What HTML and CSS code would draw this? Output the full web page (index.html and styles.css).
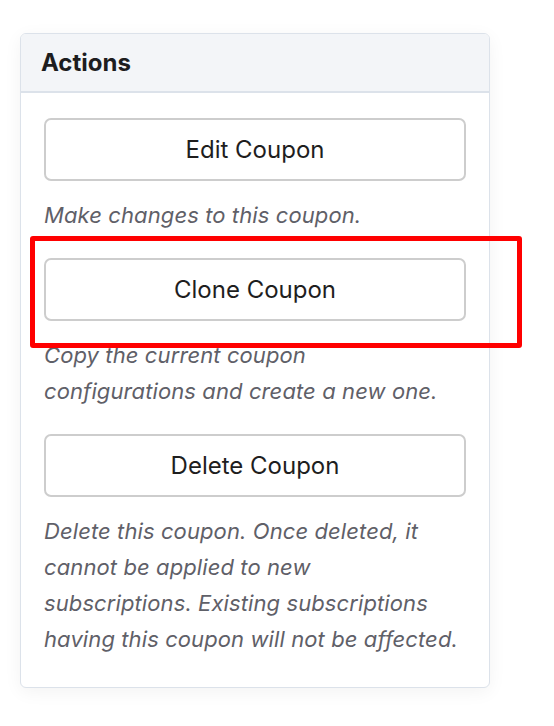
FILE: index.html
```html
<!DOCTYPE html>
<html>
<head>
<meta charset="utf-8">
<link rel="stylesheet" href="styles.css">
</head>
<body>
<div class="page">
  <div class="panel">
    <div class="panel-header">Actions</div>
    <div class="panel-body">
      <button class="btn">Edit Coupon</button>
      <p class="desc">Make changes to this coupon.</p>
      <button class="btn">Clone Coupon</button>
      <p class="desc">Copy the current coupon configurations and create a new one.</p>
      <button class="btn">Delete Coupon</button>
      <p class="desc">Delete this coupon. Once deleted, it cannot be applied to new subscriptions. Existing subscriptions having this coupon will not be affected.</p>
    </div>
  </div>
  <div class="highlight"></div>
</div>
</body>
</html>
```
FILE: styles.css
```css
html, body {
  margin: 0;
  padding: 0;
  background: #ffffff;
}
body {
  font-family: Inter, "Open Sans", "Liberation Sans", sans-serif;
}
.page {
  position: relative;
  width: 554px;
  height: 726px;
  padding: 33px 0 0 20px;
  box-sizing: border-box;
}
.panel {
  width: 470px;
  box-sizing: border-box;
  border: 1px solid #dce2ea;
  border-radius: 6px;
  background: #fff;
  box-shadow: 0 4px 18px rgba(0, 0, 0, 0.05);
  overflow: hidden;
}
.panel-header {
  height: 59px;
  box-sizing: border-box;
  background: #f3f5f8;
  border-bottom: 2px solid #dce2ea;
  padding: 0 20px;
  display: flex;
  align-items: center;
  font-size: 24px;
  font-weight: 700;
  color: #1d1d1f;
}
.panel-body {
  padding: 25px 23px 30px 23px;
  display: flex;
  flex-direction: column;
}
.btn {
  height: 63px;
  width: 100%;
  box-sizing: border-box;
  border: 2px solid #cdcdcd;
  border-radius: 7px;
  background: #fff;
  font-family: inherit;
  font-size: 24px;
  color: #1e1e1e;
  padding: 0;
}
.desc {
  margin: 16px 0 25px 0;
  max-width: 420px;
  font-size: 22px;
  line-height: 36px;
  letter-spacing: 0.1px;
  font-style: italic;
  color: #5f6068;
}
.desc:last-child {
  margin-bottom: 0;
}
.highlight {
  position: absolute;
  left: 30px;
  top: 236px;
  width: 492px;
  height: 112px;
  box-sizing: border-box;
  border: 5px solid #ff0000;
  border-radius: 3px;
}
```
